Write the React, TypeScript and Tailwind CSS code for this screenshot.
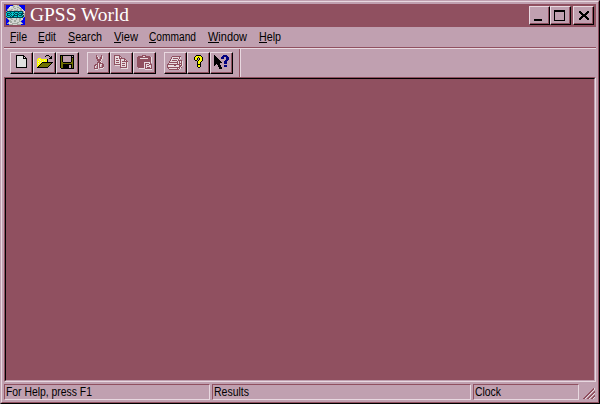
import React from "react";

const PALETTE: Record<string, string> = {
  k: "#000000", r: "#905060", w: "#e8dce0", p: "#e0e0e0", y: "#ffff00", o: "#707000",
  b: "#000080", c: "#00d0d0", g: "#a0a8a0", l: "#d0d4d0", n: "#0000f0", t: "#004858",
};

function Pixels({ rows, className = "" }: { rows: string[]; className?: string }) {
  const width = Math.max(...rows.map((r) => r.length));
  return (
    <svg width={width} height={rows.length} viewBox={`0 0 ${width} ${rows.length}`} shapeRendering="crispEdges" className={`block shrink-0 ${className}`}>
      {rows.flatMap((row, y) =>
        [...row].map((ch, x) => (PALETTE[ch] ? <rect key={`${x}-${y}`} x={x} y={y} width="1" height="1" fill={PALETTE[ch]} /> : null)),
      )}
    </svg>
  );
}

const NEW = [
  "kkkkkkkk...", "kppppppkk..", "kppppppkpk.", "kppppppkkkk", "kpppppppppk", "kpppppppppk", "kpppppppppk",
  "kpppppppppk", "kpppppppppk", "kpppppppppk", "kpppppppppk", "kpppppppppk", "kkkkkkkkkkk",
];
const OPEN = [
  ".........kkk....", "........k...k.k.", ".............kk.", ".yyy........kkk.", "yywyyyyyyyk.....", "yyywyyywyyk.....",
  "ywyyywyyyyk.....", "yyywykkkkkkkkkkk", "ywyykoooooooook.", "yyykoooooooook..", "yykoooooooook...", "ykoooooooook....", "kkkkkkkkkkk.....",
];
const SAVE = [
  "kkkkkkkkkkkkkk", "kok........k.k", "kok........kkk", "kok........kok", "kok........kok", "kok........kok", "kok........kok",
  "kookkkkkkkkook", "kooooooooooook", "kookkkkkkkkkok", "kookkkkkk..kok", "kookkkkkk..kok", "kookkkkkk..kok", ".kkkkkkkkkkkkk",
];
const CUT = [
  "..r....r..", "..rw...rw.", "..rrw.rrw.", "..rrw.rrw.", "...rrrrw..", "...rrrrw..", "....rrw...", "...rrrrw..",
  "...rwrrrr.", ".rrrwrwwrr", "rrwrwrw.rr", "rw.rwrw.rr", "rw.rwrrrrw", "rrrrw.www.", ".www......",
];
const COPY = [
  "rrrrrr........", "rwwwwrr.......", "rwwwwrwr......", "rwrrwrrrrrr...", "rwwwwwrwwwrr..", "rwrrrwrwwwrwr.", "rwwwwwrwrrrrrr",
  "rwrrrwrwwwwwrw", "rwwwwwrwrrrwrw", "rrrrrrrwwwwwrw", ".wwwwwrwrrrwrw", "......rwwwwwrw", "......rrrrrrrw", ".......wwwwwww",
];
const PASTE = [
  ".....rrrr......", ".rrrrrwwrrrrr..", "rrrrrrrrrrrrrrw", "rrrwwwwwwwwrrrw", "rrrrrrrrrrrrrrw", "rrrrrrrrrrrrrrw", "rrrrrrrrrrrrrrw",
  "rrrrrrrwwwwwwrw", "rrrrrrrwrrrrwr.", "rrrrrrrwrwwwrrr", "rrrrrrrwrwrrwwr", "rrrrrrrwrwwwwwr", ".rrrrrrwrwrrrwr", "..wwwwwwrrrrrrr", "........wwwwwww",
];
const PRINT = [
  ".....rrrrrrrrr..", "....rwwwwwwwrw..", "....rwrrrrrwrw..", "...rwwwwwwwrw...", "...rwrrrrrwrrrr.", "..rwwwwwwwrwrwrw", "..rrrrrrrrrwrwrw",
  ".rwwwwwwwwrwrrrw", "rrrrrrrrrrrrrwrw", "rwwwwwwrrwwwrrrw", "rwwwwwwwwwwwrrw.", "rrrrrrrrrrrrrwr.", ".rwwwwwwwwrwrw..", "..rrrrrrrrrrw...",
];
const HELP = [
  "..kkkkk..", ".kyyyyyk.", "kyyykyyyk", "kyyk.kyyk", "kyyk.kyyk", ".kk.kyyyk", "...kyyyk.", "...kyyk..",
  "...kyyk..", "...kkkk..", "...kyyk..", "...kyyk..", "....kk...",
];
const CONTEXT = [
  "k........bbbb..", "kk......bbbbbb.", "kkk....bbb..bbb", "kkkk...bbb..bbb", "kkkkk.......bbb", "kkkkkk.....bbb.", "kkkkkkk...bbb..",
  "kkkkkkkk..bbb..", "kkkkkk....bbb..", "kk.kkk.........", "k...kkk...bbb..", "....kkk...bbb..", ".....kkk.......", ".....kkk.......",
];
const LOGO = [
  "nnnnnnnglllggnnnnnn", "nnnnwwlggllllgnnnnn", "nnnwwllglllggllnnnn", "nnglllllgglllgggnnn", "nglllggllllgllggwnn", "nglgggllggggllgglwn",
  "gttttttttttttttttgw", "tccctccctccctccctgw", "ctttctctctttctttttg", "ctcctccctccttccttlg", "ctttctctttttctttctg", "tccctcttccctccccttg",
  "gttttttttttttttttgn", "ngllggllllgllggllnn", "nngllgglllgllggllnn", "nnngglllgglllglgnnn", "nnngggllgglllggnnnn", "nngwgglllllggllgnnn", "nggwwwggggggllllgnn", "nnnggggllllggggnnnn",
];
const MIN = ["........", "........", "........", "........", "........", "........", "........", "........", "kkkkkkkk", "kkkkkkkk"];
const MAX = ["kkkkkkkkkkk", "kkkkkkkkkkk", "k.........k", "k.........k", "k.........k", "k.........k", "k.........k", "k.........k", "k.........k", "k.........k", "kkkkkkkkkkk"];
const CLOSE = ["kk......kk", "kkk....kkk", ".kkk..kkk.", "..kkkkkk..", "...kkkk...", "..kkkkkk..", ".kkk..kkk.", "kkk....kkk", "kk......kk"];
const GRIP = [
  "..........rw", ".........rrw", "........rrw.", ".......rrw.r", "......rrw.rr", ".....rrw.rrw", "....rrw.rrw.", "...rrw.rrw.r", "..rrw.rrw.rr", ".rrw.rrw.rrw", "rrw.rrw.rrw.",
];

function Raised({ rows, size, pad }: { rows: string[]; size: string; pad: string }) {
  return (
    <button className={`${size} shrink-0 border border-t-[#e8d8e0] border-l-[#e8d8e0] border-r-black border-b-black bg-[#c0a0b0]`}>
      <span className={`block h-full w-full border-r border-b border-[#905060] ${pad}`}>
        <Pixels rows={rows} />
      </span>
    </button>
  );
}

const MENU = [
  { label: "File", slot: "w-7", length: 17, key: 6 },
  { label: "Edit", slot: "w-[30px]", length: 18, key: 6 },
  { label: "Search", slot: "w-[46px]", length: 34, key: 7 },
  { label: "View", slot: "w-[35px]", length: 24, key: 7 },
  { label: "Command", slot: "w-[59px]", length: 47, key: 7 },
  { label: "Window", slot: "w-[51px]", length: 39, key: 11 },
  { label: "Help", slot: "w-[40px]", length: 22, key: 8 },
];

function Label({ children, width, underline = 0 }: { children: string; width: number; underline?: number }) {
  return (
    <svg width={width} height="14" className="block overflow-visible">
      <text x="0" y="11" textLength={width} lengthAdjust="spacingAndGlyphs" fontSize="12" fill="#000">{children}</text>
      {underline > 0 && <rect x="0" y="12" width={underline} height="1" fill="#000" />}
    </svg>
  );
}

function Pane({ text, width, className }: { text: string; width: number; className: string }) {
  return (
    <div className={`h-4 border border-t-[#905060] border-l-[#905060] border-r-[#e8d8e0] border-b-[#e8d8e0] pl-px ${className}`}>
      <Label width={width}>{text}</Label>
    </div>
  );
}

export default function App() {
  return (
    <div className="h-[404px] w-[600px] overflow-hidden border border-t-[#c0a0b0] border-l-[#c0a0b0] border-r-black border-b-black bg-[#c0a0b0] font-['Liberation_Sans',Arial,sans-serif]">
      <div className="flex h-full flex-col border border-t-[#e8d8e0] border-l-[#e8d8e0] border-r-[#905060] border-b-[#905060] px-0.5 pt-0.5">
        <header className="flex h-[23px] shrink-0 bg-[#905060] pt-px pl-0.5">
          <Pixels rows={LOGO} />
          <svg width="120" height="22" className="ml-[5px] block">
            <text x="0" y="16" textLength="99" lengthAdjust="spacingAndGlyphs" fontSize="18" fill="#fff" className="font-['Liberation_Serif',serif]">GPSS World</text>
          </svg>
          <div className="mt-px mr-0.5 ml-auto flex">
            <Raised rows={MIN} size="h-[19px] w-[21px]" pad="pt-[4px] pl-[4px]" />
            <Raised rows={MAX} size="h-[19px] w-[21px]" pad="pt-[3px] pl-[3px]" />
            <Raised rows={CLOSE} size="ml-0.5 h-[19px] w-[21px]" pad="pt-[4px] pl-[5px]" />
          </div>
        </header>
        <nav className="flex h-5 shrink-0 pt-[3px] pl-1.5">
          {MENU.map((m) => (
            <div key={m.label} className={`${m.slot} shrink-0`}>
              <Label width={m.length} underline={m.key}>{m.label}</Label>
            </div>
          ))}
        </nav>
        <div className="flex h-[30px] shrink-0 border-t border-[#905060]">
          <div className="flex h-[29px] w-full border-t border-[#e8d8e0]">
            <div className="flex h-7 w-[236px] border-r border-[#905060] pt-[3px] pl-1.5">
              <Raised rows={NEW} size="h-[22px] w-[23px]" pad="pt-[2px] pl-[5px]" />
              <Raised rows={OPEN} size="h-[22px] w-[23px]" pad="pt-[2px] pl-[3px]" />
              <Raised rows={SAVE} size="h-[22px] w-[23px]" pad="pt-[2px] pl-[3px]" />
              <div className="w-2" />
              <Raised rows={CUT} size="h-[22px] w-[23px]" pad="pt-[2px] pl-[6px]" />
              <Raised rows={COPY} size="h-[22px] w-[23px]" pad="pt-[2px] pl-[3px]" />
              <Raised rows={PASTE} size="h-[22px] w-[23px]" pad="pt-[2px] pl-[3px]" />
              <div className="w-2" />
              <Raised rows={PRINT} size="h-[22px] w-[23px]" pad="pt-[3px] pl-[2px]" />
              <Raised rows={HELP} size="h-[22px] w-[23px]" pad="pt-[2px] pl-[6px]" />
              <Raised rows={CONTEXT} size="h-[22px] w-[23px]" pad="pt-[2px] pl-[3px]" />
            </div>
            <div className="h-7 w-px bg-[#e8d8e0]" />
          </div>
        </div>
        <main className="h-[305px] shrink-0 border border-t-[#905060] border-l-[#905060] border-r-[#e8d8e0] border-b-[#e8d8e0]">
          <div className="h-full border border-t-black border-l-black border-r-[#c0a0b0] border-b-[#c0a0b0] bg-[#905060]" />
        </main>
        <footer className="flex h-5 shrink-0 pt-0.5">
          <Pane text="For Help, press F1" width={86} className="w-[206px]" />
          <Pane text="Results" width={35} className="ml-0.5 w-[259px]" />
          <Pane text="Clock" width={26} className="ml-0.5 w-[106px]" />
          <Pixels rows={GRIP} className="mt-1 ml-1" />
        </footer>
      </div>
    </div>
  );
}
